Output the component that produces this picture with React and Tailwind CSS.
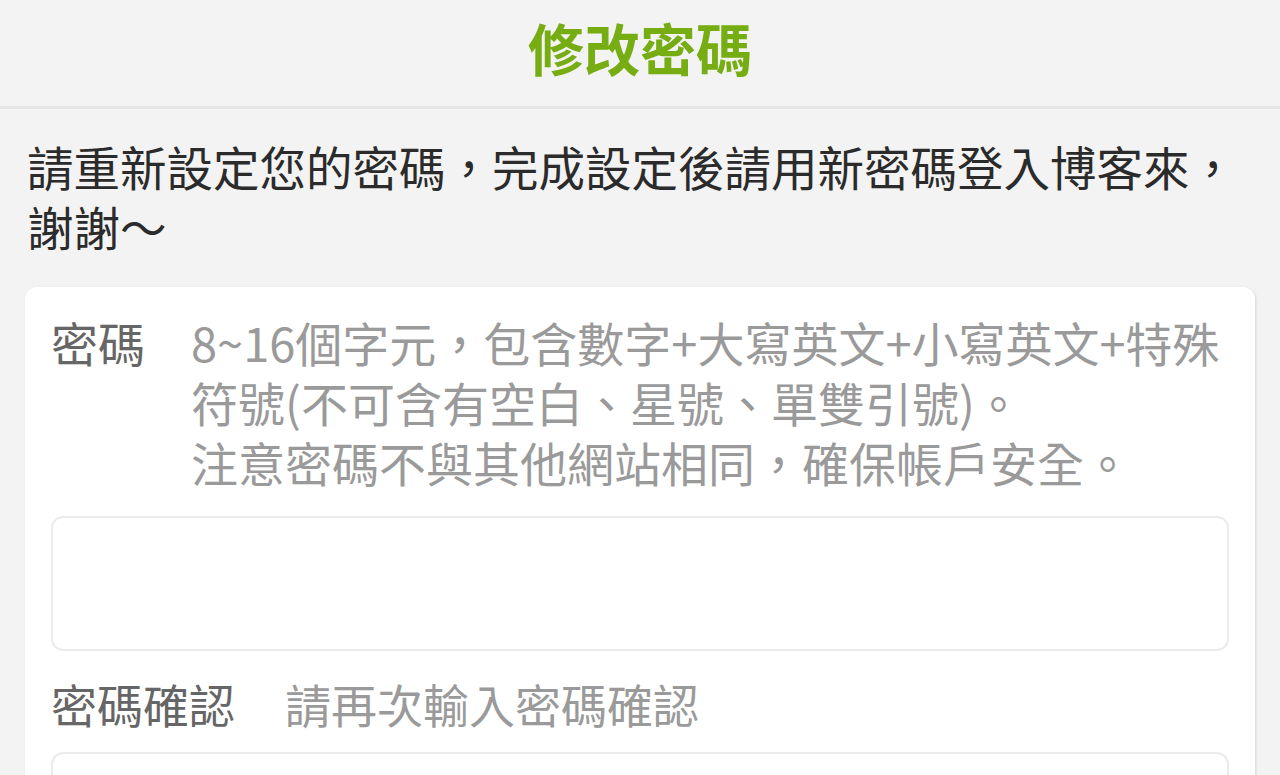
import React from 'react';

const font = { fontFamily: '"Noto Sans CJK TC", "Noto Sans", sans-serif' };

const Field = ({ label, hint, className }) => (
    <div className={`flex items-start leading-[60px] ${className}`}>
        <span className="shrink-0 text-[#666666]">{label}</span>
        <div className="text-[#9a9a9a]">{hint}</div>
    </div>
);

const App = () => {
    return (
        <div className="min-h-[775px] bg-[#f3f3f3]" style={font}>
            <header className="flex h-[109px] items-center justify-center border-b-[3px] border-[#e6e6e6] pb-[12px]">
                <h1 className="text-[56px] font-bold leading-none text-[#76ad12]">修改密碼</h1>
            </header>

            <p className="px-[27px] pt-[27px] text-[46.5px] leading-[60px] text-[#2b2b2b]">
                請重新設定您的密碼，完成設定後請用新密碼登入博客來，<br />謝謝～
            </p>

            <div className="mx-[25px] mt-[31px] rounded-[12px] bg-white px-[26px] pt-[25px] pb-[20px] shadow-[1px_1px_3px_rgba(0,0,0,0.12)]">
                <Field
                    label="密碼"
                    className="gap-[46px] text-[47px]"
                    hint={
                        <>
                            8~16個字元，包含數字+大寫英文+小寫英文+特殊<br />
                            符號(不可含有空白、星號、單雙引號)。<br />
                            注意密碼不與其他網站相同，確保帳戶安全。
                        </>
                    }
                />
                <div className="mt-[24px] h-[135px] rounded-[12px] border-2 border-[#ebebeb] bg-white" />

                <div className="mt-[22px]">
                    <Field label="密碼確認" className="gap-[50px] text-[46px]" hint="請再次輸入密碼確認" />
                </div>
                <div className="mt-[19px] h-[135px] rounded-[12px] border-2 border-[#ebebeb] bg-white" />
            </div>
        </div>
    );
};

export default App;
